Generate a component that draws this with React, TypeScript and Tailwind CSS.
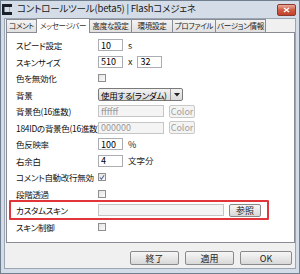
import { ReactNode } from "react";

const font = { fontFamily: '"Noto Sans CJK JP", "Liberation Sans", sans-serif' };

function TextBox({ value, w = "w-[25px]", disabled }: { value?: string; w?: string; disabled?: boolean }) {
  return (
    <div
      className={`${w} h-[12px] border flex items-center px-[2px] text-[9px] leading-none ${
        disabled ? "bg-[#f4f4f4] border-[#c5c5c5] text-[#9a9a9a]" : "bg-white border-[#abadb3] text-black"
      }`}
    >
      {value}
    </div>
  );
}

function Check({ checked }: { checked?: boolean }) {
  return (
    <div className="w-[8px] h-[8px] border border-[#8f8f8f] bg-gradient-to-br from-[#e4e4e4] to-[#fafafa] flex items-center justify-center">
      {checked && (
        <svg width="7" height="7" viewBox="0 0 7 7">
          <path d="M1 3.5 L2.8 5.5 L6 0.8" fill="none" stroke="#4a5f97" strokeWidth="1.2" />
        </svg>
      )}
    </div>
  );
}

function Btn({ children, w, disabled, h = "h-[13px]" }: { children: ReactNode; w: string; disabled?: boolean; h?: string }) {
  return (
    <div
      className={`${w} ${h} rounded-[2px] border flex items-center justify-center text-[9px] leading-none ${
        disabled
          ? "border-[#c9c9c9] bg-[#f4f4f4] text-[#a0a0a0]"
          : "border-[#8a8a8a] bg-gradient-to-b from-[#f6f6f6] via-[#e8e8e8] to-[#d8d8d8] text-[#222]"
      }`}
    >
      {children}
    </div>
  );
}

function Row({ label, children }: { label: string; children?: ReactNode }) {
  return (
    <div className="h-[16.5px] flex items-center">
      <div className="w-[91px] pl-[9px] text-[8.5px] tracking-[-0.3px] leading-none text-[#111] whitespace-nowrap">{label}</div>
      <div className="flex items-center gap-[5px] text-[9px] text-[#222]">{children}</div>
    </div>
  );
}

const tabs = [
  { t: "コメント", w: "w-[31px]" },
  { t: "メッセージバー", w: "w-[54px]" },
  { t: "高度な設定", w: "w-[43px]" },
  { t: "環境設定", w: "w-[42px]" },
  { t: "プロファイル", w: "w-[44px]" },
  { t: "バージョン情報", w: "w-[51px]" },
];

export default function App() {
  return (
    <div
      style={font}
      className="w-[300px] h-[274px] bg-[#d4dde7] border border-[#6f7f90] flex flex-col overflow-hidden [font-feature-settings:'palt']"
    >
      {/* title bar */}
      <div className="h-[16px] flex items-center pl-[1px] pr-[3px]">
        <svg width="10" height="11" viewBox="0 0 10 11" className="mt-[1px]">
          <rect x="0" y="0" width="10" height="11" fill="#1a1f2a" />
          <rect x="2.5" y="3" width="5" height="5" fill="#d4dde7" />
          <rect x="7.5" y="3" width="2.5" height="5" fill="#d4dde7" />
        </svg>
        <span className="ml-[5px] text-[9.5px] tracking-[-0.2px] leading-none text-[#1a1a1a] whitespace-nowrap">
          コントロールツール(beta5) | Flashコメジェネ
        </span>
        <div className="ml-auto mt-[2px] w-[19px] h-[12px] rounded-[2px] border border-[#8a3b30] bg-gradient-to-b from-[#e9a999] via-[#d05a43] to-[#c3412b] flex items-center justify-center">
          <svg width="7" height="6" viewBox="0 0 7 6">
            <path d="M1 1 L6 5 M6 1 L1 5" stroke="white" strokeWidth="1.5" />
          </svg>
        </div>
      </div>

      {/* client */}
      <div className="mx-[3px] mt-[1px] bg-[#f0f0f0] flex-1 mb-[4px] border border-[#9aa6b3] flex flex-col">
        {/* tabs */}
        <div className="flex items-end h-[14px] pl-[1px] mt-[-1px]">
          {tabs.map(({ t, w }, i) =>
            i === 1 ? (
              <div
                key={t}
                className={`${w} h-[15px] bg-white border border-b-0 border-[#898c95] flex items-center justify-center text-[7.5px] tracking-[-0.3px] leading-none whitespace-nowrap text-[#333] relative z-10 mb-[-1px] ml-[-1px]`}
              >
                {t}
              </div>
            ) : (
              <div
                key={t}
                className={`${w} h-[13px] bg-gradient-to-b from-[#f3f3f3] to-[#e0e0e0] border border-b-0 border-[#898c95] flex items-center justify-center text-[7.5px] tracking-[-0.3px] leading-none whitespace-nowrap text-[#222] ml-[-1px] first:ml-0`}
              >
                {t}
              </div>
            )
          )}
        </div>

        {/* panel */}
        <div className="mx-[1px] h-[211px] bg-white border border-[#898c95] pt-[4px] w-[289px]">
          <Row label="スピード設定">
            <TextBox value="10" />
            <span>s</span>
          </Row>
          <Row label="スキンサイズ">
            <TextBox value="510" />
            <span>x</span>
            <TextBox value="32" />
          </Row>
          <Row label="色を無効化">
            <Check />
          </Row>
          <Row label="背景">
            <div className="w-[85px] h-[13px] border border-[#7a7a7a] rounded-[2px] bg-gradient-to-b from-[#f2f2f2] to-[#d9d9d9] flex items-center text-[8.5px] tracking-[-0.3px] leading-none text-black">
              <span className="pl-[2px] flex-1 whitespace-nowrap">使用する(ランダム)</span>
              <div className="w-[12px] h-full border-l border-[#9a9a9a] flex items-center justify-center">
                <svg width="6" height="4" viewBox="0 0 6 4">
                  <path d="M0 0 H6 L3 3.5 Z" fill="#222" />
                </svg>
              </div>
            </div>
          </Row>
          <Row label="背景色(16進数)">
            <TextBox value="ffffff" w="w-[66px]" disabled />
            <Btn w="w-[26px]" disabled>
              Color
            </Btn>
          </Row>
          <Row label="184IDの背景色(16進数)">
            <TextBox value="000000" w="w-[66px]" disabled />
            <Btn w="w-[26px]" disabled>
              Color
            </Btn>
          </Row>
          <Row label="色反映率">
            <TextBox value="100" />
            <span>%</span>
          </Row>
          <Row label="右余白">
            <TextBox value="4" />
            <span className="text-[8.5px]">文字分</span>
          </Row>
          <Row label="コメント自動改行無効">
            <Check checked />
          </Row>
          <Row label="段階透過">
            <Check />
          </Row>
          <div className="relative">
            <Row label="カスタムスキン">
              <TextBox w="w-[126px]" disabled />
              <Btn w="w-[32px]" h="h-[13px]">
                参照
              </Btn>
            </Row>
            <div className="absolute left-[2px] top-[-2px] w-[260px] h-[20px] border-2 border-[#e0353b] rounded-[1px]" />
          </div>
          <Row label="スキン制御">
            <Check />
          </Row>
        </div>

        {/* buttons */}
        <div className="flex justify-end gap-[6px] pr-[3px] mt-[8px]">
          <Btn w="w-[49px]" h="h-[14px]">終了</Btn>
          <Btn w="w-[49px]" h="h-[14px]">適用</Btn>
          <Btn w="w-[52px]" h="h-[14px]">OK</Btn>
        </div>
      </div>
    </div>
  );
}
